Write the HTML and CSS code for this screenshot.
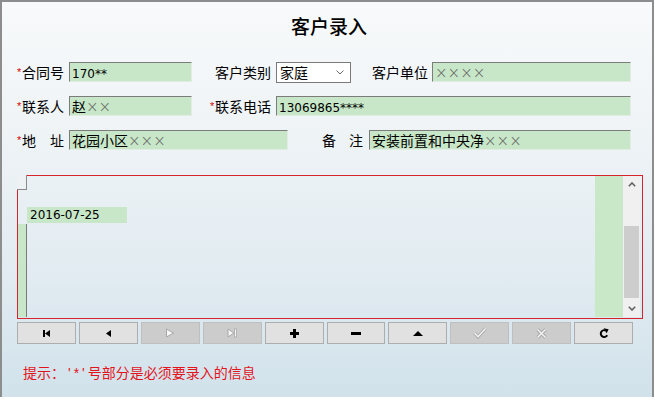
FILE: index.html
```html
<!DOCTYPE html>
<html lang="zh">
<head>
<meta charset="utf-8">
<title>客户录入</title>
<link rel="stylesheet" href="styles.css">
</head>
<body>
<div class="window">
  <h1 class="title">客户录入</h1>
  <div class="form">
    <div class="row">
      <span class="req">*</span><span class="lbl w42">合同号</span>
      <div class="inp w123 ml5"><span class="lat">170**</span></div>
      <span class="lbl ml23">客户类别</span>
      <div class="select ml5"><span>家庭</span>
        <svg class="chev" width="8" height="5" viewBox="0 0 8 5"><path d="M0.5 0.5L4 4L7.5 0.5" fill="none" stroke="#666" stroke-width="1"/></svg>
      </div>
      <span class="lbl ml21">客户单位</span>
      <div class="inp w199 ml4"><span class="x">××××</span></div>
    </div>
    <div class="row">
      <span class="req">*</span><span class="lbl w42">联系人</span>
      <div class="inp w123 ml5">赵<span class="x">××</span></div>
      <span class="req ml18">*</span><span class="lbl">联系电话</span>
      <div class="inp w355 ml5"><span class="lat">13069865****</span></div>
    </div>
    <div class="row">
      <span class="req">*</span><span class="lbl w42 split"><span>地</span><span>址</span></span>
      <div class="inp w219 ml5">花园小区<span class="x">×××</span></div>
      <span class="lbl w41 split ml34"><span>备</span><span>注</span></span>
      <div class="inp w262 ml6">安装前置和中央净<span class="x">×××</span></div>
    </div>
  </div>

  <div class="grid">
    <div class="grid-main">
      <div class="corner"></div>
      <div class="daterow"><div class="date">2016-07-25</div></div>
      <div class="indicator"></div>
    </div>
    <div class="greencol"></div>
    <div class="scroll">
      <div class="sarrow"><svg width="8" height="5" viewBox="0 0 8 5"><path d="M0.8 4.2L4 1L7.2 4.2" fill="none" stroke="#606060" stroke-width="1.6"/></svg></div>
      <div class="track"><div class="thumb"></div></div>
      <div class="sarrow"><svg width="8" height="5" viewBox="0 0 8 5"><path d="M0.8 0.8L4 4L7.2 0.8" fill="none" stroke="#606060" stroke-width="1.6"/></svg></div>
    </div>
  </div>

  <div class="toolbar">
    <div class="btn"><svg width="7" height="7" viewBox="0 0 7 7"><rect width="2" height="7"/><path d="M7 0V7L2 3.5Z"/></svg></div>
    <div class="btn"><svg width="5" height="7" viewBox="0 0 5 7"><path d="M5 0V7L0 3.5Z"/></svg></div>
    <div class="btn off"><svg width="10" height="10" viewBox="0 0 10 10"><path d="M1.5 1L8.5 5L1.5 9Z" fill="#f6f6f6" stroke="#a8a8a8" stroke-width="1"/></svg></div>
    <div class="btn off"><svg width="11" height="10" viewBox="0 0 11 10"><path d="M1 1L7 5L1 9Z" fill="#f6f6f6" stroke="#a8a8a8" stroke-width="1"/><rect x="7.5" y="1" width="2" height="8" fill="#f6f6f6" stroke="#a8a8a8" stroke-width="0.8"/></svg></div>
    <div class="btn"><svg width="9" height="9" viewBox="0 0 9 9"><path d="M3 0H6V3H9V6H6V9H3V6H0V3H3Z"/></svg></div>
    <div class="btn"><svg width="10" height="3" viewBox="0 0 10 3"><rect width="10" height="3"/></svg></div>
    <div class="btn"><svg width="10" height="5" viewBox="0 0 10 5"><path d="M0 5L5 0L10 5Z"/></svg></div>
    <div class="btn off"><svg width="14" height="12" viewBox="0 0 14 12"><path d="M1.5 6L5 9.8L12.5 1.5" fill="none" stroke="#a8a8a8" stroke-width="3.2" stroke-linejoin="miter"/><path d="M1.5 6L5 9.8L12.5 1.5" fill="none" stroke="#f6f6f6" stroke-width="1.4"/></svg></div>
    <div class="btn off"><svg width="11" height="11" viewBox="0 0 11 11"><path d="M1.5 1.5L9.5 9.5M9.5 1.5L1.5 9.5" fill="none" stroke="#a8a8a8" stroke-width="3.2"/><path d="M1.5 1.5L9.5 9.5M9.5 1.5L1.5 9.5" fill="none" stroke="#f6f6f6" stroke-width="1.4"/></svg></div>
    <div class="btn"><svg width="10" height="10" viewBox="0 0 10 10"><path d="M6.8 2.6A3.4 3.4 0 1 0 8.2 7.3" fill="none" stroke="#000" stroke-width="2"/><path d="M4.6 0.3L9.6 1.2L7.6 5.2Z"/></svg></div>
  </div>

  <p class="tip">提示：<span class="q">'*'</span>号部分是必须要录入的信息</p>
</div>
</body>
</html>
```

FILE: styles.css
```css
html, body {
  margin: 0;
  background: #ffffff;
}

.window {
  width: 650px;
  height: 395px;
  border: 2px solid #8d8d8d;
  border-bottom: 0;
  background: linear-gradient(to bottom, #f8fafb 0%, #eef3f6 35%, #e1ebf1 70%, #d1e2eb 100%);
  font-family: "Noto Sans CJK SC", sans-serif;
  font-size: 14px;
  color: #000;
}

.title {
  margin: 13px 0 0 4px;
  line-height: 22px;
  font-size: 19px;
  font-weight: 500;
  text-align: center;
}

.form {
  margin-top: 25px;
  padding-left: 15px;
  display: flex;
  flex-direction: column;
  gap: 14px;
}

.row {
  display: flex;
  align-items: center;
  height: 20px;
}

.req {
  display: inline-block;
  width: 5px;
  color: #d40000;
  font-family: "Liberation Sans", sans-serif;
  font-size: 11px;
  line-height: 14px;
}

.lbl {
  white-space: nowrap;
  line-height: 20px;
}

.split {
  display: flex;
  justify-content: space-between;
}

.w41 { width: 41px; }
.w42 { width: 42px; }
.w123 { width: 123px; }
.w199 { width: 199px; }
.w219 { width: 219px; }
.w262 { width: 262px; }
.w355 { width: 355px; }
.ml4 { margin-left: 4px; }
.ml5 { margin-left: 5px; }
.ml6 { margin-left: 6px; }
.ml18 { margin-left: 18px; }
.ml21 { margin-left: 21px; }
.ml23 { margin-left: 23px; }
.ml34 { margin-left: 34px; }

.inp {
  box-sizing: border-box;
  height: 20px;
  background: #c8e7c8;
  border-top: 1px solid #7c7c7c;
  border-left: 1px solid #7c7c7c;
  border-right: 1px solid #e2ece2;
  border-bottom: 1px solid #e2ece2;
  padding-left: 2px;
  line-height: 18px;
  white-space: nowrap;
  overflow: hidden;
}

.lat {
  font-family: "DejaVu Sans", sans-serif;
  font-size: 12px;
}

.x {
  color: #666666;
  font-family: "DejaVu Sans", sans-serif;
  font-weight: 200;
  font-size: 15px;
  letter-spacing: 0;
}

.select {
  box-sizing: border-box;
  width: 75px;
  height: 21px;
  background: #ffffff;
  border: 1px solid #7a7a7a;
  display: flex;
  align-items: center;
  justify-content: space-between;
  padding: 0 6px 0 3px;
  line-height: 19px;
}

.grid {
  margin: 25px 0 0 15px;
  box-sizing: border-box;
  width: 626px;
  height: 144px;
  border: 1px solid #d8232a;
  padding-right: 2px;
  display: flex;
}

.grid-main {
  flex: 1;
  display: flex;
  flex-direction: column;
}

.corner {
  box-sizing: border-box;
  width: 10px;
  height: 15px;
  margin: -1px 0 0 -1px;
  border-right: 1px solid #8a8a8a;
  border-bottom: 1px solid #8a8a8a;
  background: #eef2f5;
}

.daterow {
  display: flex;
  height: 16px;
  margin-top: 17px;
}

.date {
  margin-left: 9px;
  width: 100px;
  box-sizing: border-box;
  padding-left: 3px;
  background: #c8e7c8;
  font-family: "DejaVu Sans", sans-serif;
  font-size: 12px;
  line-height: 16px;
}

.indicator {
  flex: 1;
  width: 8px;
  margin: 1px 0 1px 0;
  background: #c8e7c8;
  border-right: 1px solid #7a7a7a;
}

.greencol {
  width: 28px;
  margin-bottom: 1px;
  background: #c8e8c8;
}

.scroll {
  width: 17px;
  margin-bottom: 1px;
  background: #f0f0f0;
  display: flex;
  flex-direction: column;
}

.sarrow {
  height: 17px;
  display: flex;
  align-items: center;
  justify-content: center;
}

.track {
  flex: 1;
  padding-top: 33px;
}

.thumb {
  margin: 0 1px;
  height: 72px;
  background: #cdcdcd;
}

.toolbar {
  margin: 3px 0 0 15px;
  width: 616px;
  height: 22px;
  display: grid;
  grid-template-columns: repeat(10, 1fr);
  gap: 3px;
}

.btn {
  box-sizing: border-box;
  background: #e1e1e1;
  border: 1px solid #adadad;
  display: flex;
  align-items: center;
  justify-content: center;
}

.btn.off {
  background: #cccccc;
  border-color: #bfbfbf;
}

.tip {
  margin: 18px 0 0 21px;
  line-height: 20px;
  font-size: 14px;
  color: #e3141c;
}

.q {
  font-family: "Liberation Sans", sans-serif;
  letter-spacing: 3px;
  padding-left: 3px;
}
```
